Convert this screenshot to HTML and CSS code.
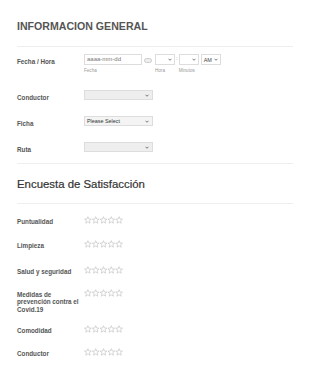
FILE: index.html
```html
<!DOCTYPE html>
<html lang="es">
<head>
  <meta charset="UTF-8">
  <title>Informacion General</title>
  <link rel="stylesheet" href="styles.css">
</head>
<body>
  <div class="form">
    <!-- Informacion general -->
    <h1 class="page-title">INFORMACION GENERAL</h1>
    <div class="line"></div>

    <div class="row row-date">
      <div class="label">Fecha / Hora</div>
      <div class="date-time">
        <div class="field-sub">
          <div class="date-input">aaaa-mm-dd</div>
          <div class="sub">Fecha</div>
        </div>
        <span class="pill"></span>
        <div class="field-sub">
          <div class="mini-select"><span></span><svg class="chev" viewBox="0 0 8 5"><path d="M1 1 L4 4 L7 1" /></svg></div>
          <div class="sub">Hora</div>
        </div>
        <span class="colon">:</span>
        <div class="field-sub">
          <div class="mini-select"><span></span><svg class="chev" viewBox="0 0 8 5"><path d="M1 1 L4 4 L7 1" /></svg></div>
          <div class="sub">Minutos</div>
        </div>
        <div class="field-sub">
          <div class="mini-select ampm"><span>AM</span><svg class="chev" viewBox="0 0 8 5"><path d="M1 1 L4 4 L7 1" /></svg></div>
        </div>
      </div>
    </div>

    <div class="row">
      <div class="label">Conductor</div>
      <div class="select"><span></span><svg class="chev" viewBox="0 0 8 5"><path d="M1 1 L4 4 L7 1" /></svg></div>
    </div>
    <div class="row">
      <div class="label">Ficha</div>
      <div class="select light"><span>Please Select</span><svg class="chev" viewBox="0 0 8 5"><path d="M1 1 L4 4 L7 1" /></svg></div>
    </div>
    <div class="row last">
      <div class="label">Ruta</div>
      <div class="select"><span></span><svg class="chev" viewBox="0 0 8 5"><path d="M1 1 L4 4 L7 1" /></svg></div>
    </div>

    <div class="line"></div>

    <!-- Encuesta -->
    <h2 class="section-title">Encuesta de Satisfacción</h2>
    <div class="line"></div>

    <div id="ratings"></div>
  </div>

  <script>
    const questions = [
      "Puntualidad",
      "Limpieza",
      "Salud y seguridad",
      "Medidas de prevención contra el Covid.19",
      "Comodidad",
      "Conductor"
    ];

    function star(x) {
      return `<polygon transform="translate(${x},0)" points="4,0.6 5,3 7.5,3.1 5.5,4.7 6.2,7.3 4,5.9 1.8,7.3 2.5,4.7 0.5,3.1 3,3" />`;
    }

    const list = document.getElementById("ratings");
    questions.forEach(q => {
      const row = document.createElement("div");
      row.classList.add("row", "rate-row");
      let stars = "";
      for (let i = 0; i < 5; i++) stars += star(i * 8);
      row.innerHTML = `
        <div class="label">${q}</div>
        <svg class="stars" viewBox="0 0 40 8">${stars}</svg>
      `;
      list.appendChild(row);
    });
  </script>
</body>
</html>
```
FILE: styles.css
```css
body {
  margin: 0;
  background: #fff;
  font-family: "Liberation Sans", Arial, sans-serif;
  color: #555;
}

.form {
  width: 276px;
  padding: 12px 0 0 17px;
}

.page-title {
  margin: 0;
  padding: 8px 0 14px;
  font-size: 10.6px;
  font-weight: bold;
  color: #555;
}

.section-title {
  margin: 0;
  padding: 14px 0 13px;
  font-size: 11.4px;
  font-weight: normal;
  color: #333;
  -webkit-text-stroke: 0.2px #333;
}

.line {
  height: 1px;
  background: #eee;
}

/* Rows */
.row {
  display: flex;
  align-items: flex-start;
  height: 26px;
}

.row.last {
  height: 18px;
}

.row-date {
  margin-top: 10px;
  height: 36px;
}

.label {
  width: 67px;
  flex-shrink: 0;
  font-size: 6.3px;
  font-weight: bold;
  line-height: 7.5px;
  color: #555;
  padding-top: 1px;
}

.row .select {
  margin-top: -3px;
}

/* Date & time */
.date-time {
  display: flex;
  align-items: flex-start;
  margin-top: -3px;
}

.field-sub {
  display: flex;
  flex-direction: column;
}

.date-input {
  width: 54px;
  height: 9px;
  border: 1px solid #ddd;
  font-size: 6px;
  line-height: 9px;
  padding-left: 2px;
  color: #777;
}

.sub {
  font-size: 4.6px;
  color: #999;
  margin-top: 3px;
}

.pill {
  width: 6px;
  height: 3px;
  border: 1px solid #ccc;
  border-radius: 3px;
  background: #eee;
  margin: 4px 3px 0 2px;
}

.colon {
  font-size: 6px;
  color: #888;
  margin: 1px 1px 0;
}

.mini-select {
  display: flex;
  justify-content: space-between;
  align-items: center;
  width: 14px;
  height: 9px;
  border: 1px solid #ddd;
  padding: 0 2px;
  font-size: 5.5px;
  color: #444;
}

.mini-select.ampm {
  width: 14px;
  margin-left: 2px;
}

.select {
  display: flex;
  justify-content: space-between;
  align-items: center;
  width: 62px;
  height: 8px;
  border: 1px solid #ddd;
  background: #eee;
  padding: 0 3px 0 2px;
  font-size: 5.4px;
  color: #333;
}

.select.light {
  background: #f4f4f4;
}

.chev {
  width: 4px;
  height: 3px;
  fill: none;
  stroke: #444;
  stroke-width: 1.4;
}

/* Ratings */
#ratings {
  padding-top: 13px;
}

.rate-row {
  height: 24px;
}

.rate-row:nth-child(2) {
  height: 25.5px;
}

.rate-row:nth-child(3) {
  height: 23px;
}

.rate-row:nth-child(4) {
  height: 36px;
}

.rate-row:nth-child(5) {
  height: 23px;
}

.stars {
  width: 39px;
  height: 8px;
  margin-top: -1px;
  fill: #fff;
  stroke: #bbb;
  stroke-width: 0.6;
}
```
